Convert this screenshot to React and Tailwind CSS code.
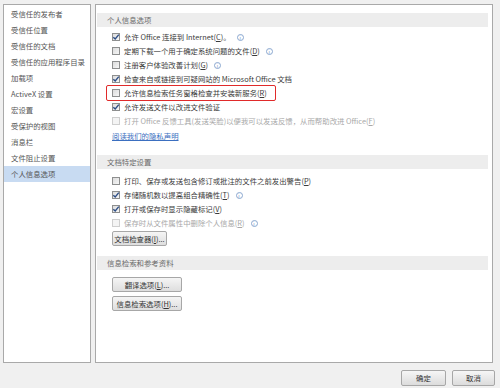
const FONT = { fontFamily: '"Noto Sans CJK SC", "Noto Sans", sans-serif' };

const NAV = [
  "受信任的发布者",
  "受信任位置",
  "受信任的文档",
  "受信任的应用程序目录",
  "加载项",
  "ActiveX 设置",
  "宏设置",
  "受保护的视图",
  "消息栏",
  "文件阻止设置",
  "个人信息选项",
];

function Box({ checked, disabled }) {
  return (
    <span
      className={`relative inline-block w-[8px] h-[8px] shrink-0 border ${
        disabled ? "border-[#cfcfcf] bg-[#f4f4f4]" : "border-[#8e8f8f] bg-gradient-to-br from-[#dcdcdc] to-[#f6f6f6]"
      }`}
    >
      {checked && (
        <svg viewBox="0 0 8 8" className="absolute -left-px -top-px w-[8px] h-[8px]">
          <path d="M1.3 4.2 L3.2 6 L6.8 1.6" fill="none" stroke="#2f4f86" strokeWidth="1.4" />
        </svg>
      )}
    </span>
  );
}

function Info() {
  return (
    <span className="ml-[2px] inline-flex items-center justify-center w-[7px] h-[7px] rounded-full border border-[#8aa7d0] text-[5px] leading-none text-[#6b8fc4]">
      i
    </span>
  );
}

function Row({ checked, disabled, info, children, mark }) {
  return (
    <div className="relative flex items-center h-[14px] pl-[16px] gap-[4px]">
      <Box checked={checked} disabled={disabled} />
      <span className={`whitespace-nowrap ${disabled ? "text-[#a8a8a8]" : "text-[#3a3a3a]"}`}>{children}</span>
      {info && <Info />}
      {mark && (
        <span className="absolute left-[10px] top-[-1px] w-[170px] h-[16px] border-[1.5px] border-[#e02a2a] rounded-[2px]" />
      )}
    </div>
  );
}

function U({ children }) {
  return <span className="underline">{children}</span>;
}

function Header({ children, className = "" }) {
  return (
    <div className={`ml-[1px] mr-[4px] h-[14px] flex items-center pl-[10px] bg-[#ededed] text-[#6a6a6a] ${className}`}>
      {children}
    </div>
  );
}

function Btn({ children, w }) {
  return (
    <div
      className={`${w} h-[15px] flex items-center justify-center border border-[#a7a7a7] rounded-[2px] bg-gradient-to-b from-[#f5f5f5] to-[#dedede] text-[#333]`}
    >
      {children}
    </div>
  );
}

export default function App() {
  return (
    <div className="w-[500px] h-[388px] bg-[#f0f0f0] overflow-hidden text-[7.4px] leading-none" style={FONT}>
      <div className="flex pt-[4px] pl-[3px] gap-[4px]">
        {/* left nav */}
        <div className="w-[88px] h-[359px] border border-[#a9a9a9] bg-white pt-[1px]">
          {NAV.map((n, i) => (
            <div
              key={n}
              className={`h-[16px] flex items-center pl-[7px] text-[#555] ${i === NAV.length - 1 ? "bg-[#c8dbf2]" : ""}`}
            >
              {n}
            </div>
          ))}
        </div>

        {/* right content */}
        <div className="w-[398px] h-[359px] border border-[#a9a9a9] bg-white pt-[8px]">
          <Header>个人信息选项</Header>
          <div className="mt-[3px]">
            <Row checked info>
              允许 Office 连接到 Internet(<U>C</U>)。
            </Row>
            <Row info>
              定期下载一个用于确定系统问题的文件(<U>D</U>)
            </Row>
            <Row info>
              注册客户体验改善计划(<U>G</U>)
            </Row>
            <Row checked>检查来自或链接到可疑网站的 Microsoft Office 文档</Row>
            <Row mark>
              允许信息检索任务窗格检查并安装新服务(<U>R</U>)
            </Row>
            <Row checked>允许发送文件以改进文件验证</Row>
            <Row disabled>
              打开 Office 反馈工具(发送笑脸)以便我可以发送反馈，从而帮助改进 Office(<U>F</U>)
            </Row>
            <div className="h-[15px] flex items-center pl-[16px] text-[#3b6fc0] underline">阅读我们的隐私声明</div>
          </div>

          <Header className="mt-[12px]">文档特定设置</Header>
          <div className="mt-[5px]">
            <Row>
              打印、保存或发送包含修订或批注的文件之前发出警告(<U>P</U>)
            </Row>
            <Row checked info>
              存储随机数以提高组合精确性(<U>T</U>)
            </Row>
            <Row checked>
              打开或保存时显示隐藏标记(<U>V</U>)
            </Row>
            <Row disabled info>
              保存时从文件属性中删除个人信息(<U>R</U>)
            </Row>
            <div className="pl-[16px] mt-[1px]">
              <Btn w="w-[55px]">
                文档检查器(<U>I</U>)...
              </Btn>
            </div>
          </div>

          <Header className="mt-[10px]">信息检索和参考资料</Header>
          <div className="pl-[16px] mt-[7px] flex flex-col gap-[4px]">
            <Btn w="w-[70px]">
              翻译选项(<U>L</U>)...
            </Btn>
            <Btn w="w-[70px]">
              信息检索选项(<U>H</U>)...
            </Btn>
          </div>
        </div>
      </div>

      {/* footer */}
      <div className="flex justify-end gap-[6px] pr-[5px] mt-[7px]">
        <div className="w-[45px] h-[16px] flex items-center justify-center border border-[#a7a7a7] rounded-[2px] bg-gradient-to-b from-[#f6f6f6] to-[#dcdcdc] text-[#333]">
          确定
        </div>
        <div className="w-[43px] h-[16px] flex items-center justify-center border border-[#a7a7a7] rounded-[2px] bg-gradient-to-b from-[#f6f6f6] to-[#dcdcdc] text-[#333]">
          取消
        </div>
      </div>
    </div>
  );
}
